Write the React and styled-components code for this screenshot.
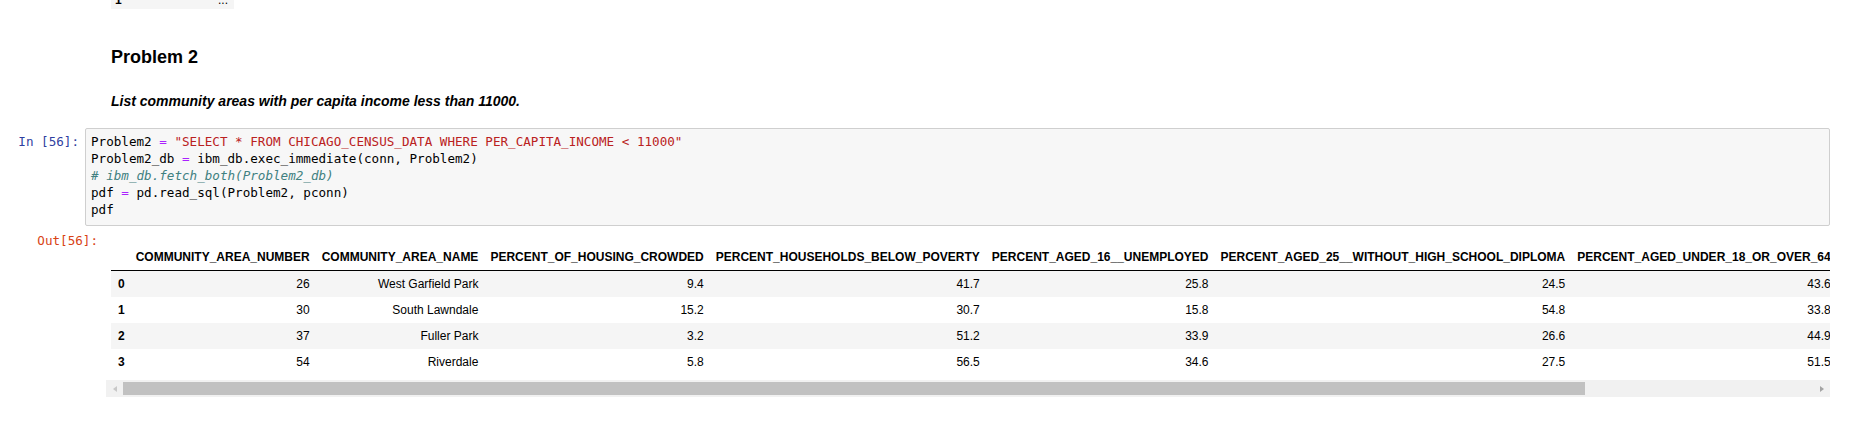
import React from "react";
import styled, { createGlobalStyle } from "styled-components";

const GlobalStyle = createGlobalStyle`
  html, body {
    margin: 0;
    padding: 0;
    background: #ffffff;
  }
  body {
    font-family: "Liberation Sans", Arial, sans-serif;
    color: #000;
  }
`;

const Notebook = styled.div`
  width: 1850px;
  display: flex;
  flex-direction: column;
`;

const PrevTail = styled.div`
  margin-left: 111px;
  width: 123px;
  height: 9px;
  overflow: hidden;
  background: #f5f5f5;
  display: flex;
  align-items: flex-end;
  justify-content: space-between;
  padding: 0 6px 0 4px;
  box-sizing: border-box;
  font-size: 12px;
  line-height: 14px;
`;

const TailText = styled.span`
  display: block;
  margin-bottom: 2px;
  font-weight: ${(p) => (p.$bold ? 700 : 400)};
`;

const MarkdownCell = styled.div`
  padding-left: 111px;
  font-family: "Liberation Sans", Arial, sans-serif;
`;

const Heading = styled.h3`
  margin: 37px 0 0;
  font-size: 18px;
  line-height: 22px;
  font-weight: 700;
`;

const Lead = styled.p`
  margin: 25px 0 0;
  font-size: 14px;
  line-height: 17px;
  font-weight: 700;
  font-style: italic;
`;

const CodeCell = styled.div`
  margin-top: 18px;
  display: flex;
  flex-direction: column;
`;

const Row = styled.div`
  display: flex;
  align-items: flex-start;
  padding-right: ${(p) => p.$right}px;
`;

const Prompt = styled.div`
  flex: none;
  width: ${(p) => p.$width}px;
  box-sizing: border-box;
  padding: ${(p) => p.$top}px ${(p) => p.$pad}px 0 0;
  text-align: right;
  font-family: "DejaVu Sans Mono", "Liberation Mono", monospace;
  font-size: 12.6px;
  line-height: 17px;
  color: ${(p) => p.$color};
`;

const Editor = styled.pre`
  flex: 1;
  margin: 0;
  background: #f7f7f7;
  border: 1px solid #cfcfcf;
  border-radius: 2px;
  padding: 4px 5px 7px;
  font-family: "DejaVu Sans Mono", "Liberation Mono", monospace;
  font-size: 12.6px;
  line-height: 17px;
  color: #000;
  white-space: pre;
  overflow: hidden;
`;

const Str = styled.span`
  color: #ba2121;
`;

const Op = styled.span`
  color: #aa22ff;
`;

const Comment = styled.span`
  color: #408080;
  font-style: italic;
`;

const Subarea = styled.div`
  flex: 1;
  min-width: 0;
  display: flex;
  flex-direction: column;
`;

const Viewport = styled.div`
  overflow: hidden;
  padding: 5.6px 0 5.6px 5px;
`;

const Table = styled.table`
  margin-top: 12px;
  border-collapse: collapse;
  border-spacing: 0;
  font-family: "Liberation Sans", Arial, sans-serif;
  font-size: 12px;
  color: #000;
  white-space: nowrap;
`;

const Head = styled.thead`
  border-bottom: 1px solid #000;
  vertical-align: bottom;
`;

const HeadCell = styled.th`
  padding: 6px;
  line-height: 14px;
  text-align: right;
  font-weight: 700;
`;

const BodyRow = styled.tr`
  background: ${(p) => (p.$odd ? "#f5f5f5" : "#ffffff")};
`;

const IndexCell = styled.th`
  padding: 6px 5px 6px 7px;
  line-height: 14px;
  text-align: left;
  font-weight: 700;
`;

const Cell = styled.td`
  padding: 6px;
  line-height: 14px;
  text-align: right;
`;

const ScrollBar = styled.div`
  display: flex;
  height: 17px;
  background: #f1f1f1;
`;

const ScrollButton = styled.div`
  flex: none;
  width: 17px;
  display: flex;
  align-items: center;
  justify-content: center;
`;

const Arrow = styled.span`
  width: 0;
  height: 0;
  border-top: 3.5px solid transparent;
  border-bottom: 3.5px solid transparent;
  ${(p) =>
    p.$dir === "left"
      ? `border-right: 4px solid ${p.$color};`
      : `border-left: 4px solid ${p.$color};`}
`;

const Track = styled.div`
  flex: 1;
  display: flex;
  align-items: center;
`;

const Thumb = styled.div`
  height: 13px;
  width: ${(p) => p.$ratio * 100}%;
  background: #c1c1c1;
`;

const columns = [
  "COMMUNITY_AREA_NUMBER",
  "COMMUNITY_AREA_NAME",
  "PERCENT_OF_HOUSING_CROWDED",
  "PERCENT_HOUSEHOLDS_BELOW_POVERTY",
  "PERCENT_AGED_16__UNEMPLOYED",
  "PERCENT_AGED_25__WITHOUT_HIGH_SCHOOL_DIPLOMA",
  "PERCENT_AGED_UNDER_18_OR_OVER_64",
  "PER_CAPITA_INCOME",
  "HARDSHIP_INDEX",
];

const rows = [
  [26, "West Garfield Park", "9.4", "41.7", "25.8", "24.5", "43.6", 10934, "92.0"],
  [30, "South Lawndale", "15.2", "30.7", "15.8", "54.8", "33.8", 10402, "96.0"],
  [37, "Fuller Park", "3.2", "51.2", "33.9", "26.6", "44.9", 10432, "97.0"],
  [54, "Riverdale", "5.8", "56.5", "34.6", "27.5", "51.5", 8201, "98.0"],
];

function App() {
  return (
    <Notebook>
      <GlobalStyle />

      <PrevTail>
        <TailText $bold>1</TailText>
        <TailText>...</TailText>
      </PrevTail>

      <MarkdownCell>
        <Heading>Problem 2</Heading>
        <Lead>List community areas with per capita income less than 11000.</Lead>
      </MarkdownCell>

      <CodeCell>
        <Row $right={20}>
          <Prompt $width={85} $pad={6} $top={5} $color="#303f9f">
            In&nbsp;[56]:
          </Prompt>
          <Editor>
            Problem2 <Op>=</Op>{" "}
            <Str>"SELECT * FROM CHICAGO_CENSUS_DATA WHERE PER_CAPITA_INCOME &lt; 11000"</Str>
            {"\n"}Problem2_db <Op>=</Op> ibm_db.exec_immediate(conn, Problem2)
            {"\n"}
            <Comment># ibm_db.fetch_both(Problem2_db)</Comment>
            {"\n"}pdf <Op>=</Op> pd.read_sql(Problem2, pconn)
            {"\n"}pdf
          </Editor>
        </Row>

        <Row $right={20}>
          <Prompt $width={106} $pad={8} $top={6} $color="#d84315">
            Out[56]:
          </Prompt>
          <Subarea>
            <Viewport>
              <Table>
                <Head>
                  <tr>
                    <HeadCell />
                    {columns.map((c) => (
                      <HeadCell key={c}>{c}</HeadCell>
                    ))}
                  </tr>
                </Head>
                <tbody>
                  {rows.map((r, i) => (
                    <BodyRow key={i} $odd={i % 2 === 0}>
                      <IndexCell>{i}</IndexCell>
                      {r.map((v, j) => (
                        <Cell key={j}>{v}</Cell>
                      ))}
                    </BodyRow>
                  ))}
                </tbody>
              </Table>
            </Viewport>
            <ScrollBar>
              <ScrollButton>
                <Arrow $dir="left" $color="#c8c8c8" />
              </ScrollButton>
              <Track>
                <Thumb $ratio={0.865} />
              </Track>
              <ScrollButton>
                <Arrow $dir="right" $color="#a3a3a3" />
              </ScrollButton>
            </ScrollBar>
          </Subarea>
        </Row>
      </CodeCell>
    </Notebook>
  );
}

export default App;
